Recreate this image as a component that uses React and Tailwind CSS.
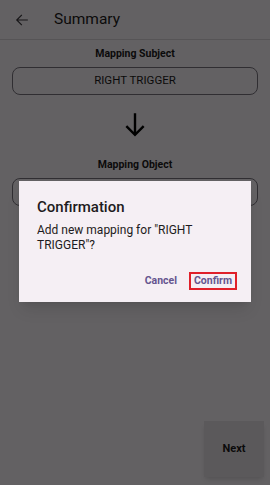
import React from 'react';

const font = { fontFamily: 'Roboto, "Noto Sans", sans-serif' };

const App = () => {
  return (
    <div className="relative w-[270px] h-[485px] bg-[#f8f3f8] overflow-hidden text-[#1d1b20]" style={font}>
      {/* header */}
      <div className="flex items-center h-[40px] border-b border-[#d8d3d8]">
        <div className="w-[42px] flex justify-center pl-[2px]">
          <svg width="14" height="14" viewBox="0 0 24 24" fill="none" stroke="#3a383c" strokeWidth="2" strokeLinecap="square">
            <path d="M21 12H4M11 4l-8 8 8 8" />
          </svg>
        </div>
        <span className="ml-[12px] text-[15.5px] leading-none">Summary</span>
      </div>

      <div className="flex flex-col items-center px-[12px]">
        <div className="mt-[8px] text-[10.5px] font-bold leading-[12px]">Mapping Subject</div>
        <div className="mt-[7px] w-full h-[28px] rounded-[8px] border border-[#79747e] flex items-center justify-center text-[11.5px]">
          RIGHT TRIGGER
        </div>
        <svg className="mt-[16px]" width="26" height="26" viewBox="0 0 24 24" fill="none" stroke="#000" strokeWidth="2.2">
          <path d="M12 2v20M4 14l8 8 8-8" />
        </svg>
        <div className="mt-[22px] text-[10.5px] font-bold leading-[12px]">Mapping Object</div>
        <div className="mt-[7px] w-full h-[28px] rounded-[8px] border border-[#79747e] flex items-center justify-center text-[11.5px]">
          TRIGGER
        </div>
      </div>

      <div className="absolute right-[6px] bottom-[8px] w-[60px] h-[56px] bg-[#e4dfe4] shadow-md flex items-center justify-center text-[11px] font-bold">
        Next
      </div>

      {/* scrim */}
      <div className="absolute inset-0 bg-black/60 flex items-start justify-start pl-[19px] pt-[181px]">
        <div className="w-[232px] bg-[#f5eff4] shadow-lg pl-[18px] pr-[14px] pt-[16px] pb-[12px]">
          <div className="text-[15px] leading-[20px] font-medium text-[#1d1b20]">Confirmation</div>
          <div className="mt-[6px] text-[12px] leading-[15px] text-[#1d1b20] pr-[2px]">
            Add new mapping for "RIGHT TRIGGER"?
          </div>
          <div className="mt-[19px] flex justify-end items-center gap-[10px]">
            <span className="text-[10.5px] leading-[12px] font-bold text-[#65558f] px-[2px]">Cancel</span>
            <span className="text-[10.5px] leading-[12px] font-bold text-[#65558f] px-[3px] py-[1px] border-2 border-[#e0202a]">Confirm</span>
          </div>
        </div>
      </div>
    </div>
  );
};

export default App;
